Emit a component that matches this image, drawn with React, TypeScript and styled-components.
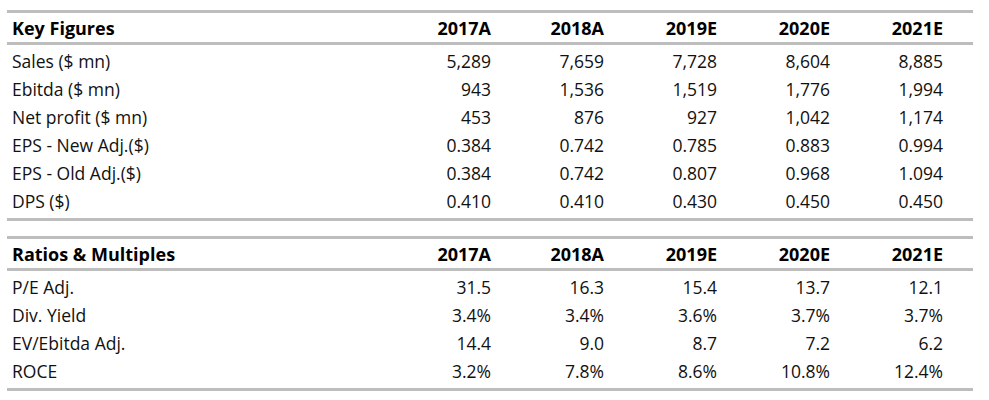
import React from 'react';
import styled, { createGlobalStyle } from 'styled-components';

type Section = {
  title: string;
  rows: [string, ...string[]][];
};

const YEARS = ['2017A', '2018A', '2019E', '2020E', '2021E'];

const SECTIONS: Section[] = [
  {
    title: 'Key Figures',
    rows: [
      ['Sales ($ mn)', '5,289', '7,659', '7,728', '8,604', '8,885'],
      ['Ebitda ($ mn)', '943', '1,536', '1,519', '1,776', '1,994'],
      ['Net profit ($ mn)', '453', '876', '927', '1,042', '1,174'],
      ['EPS - New Adj.($)', '0.384', '0.742', '0.785', '0.883', '0.994'],
      ['EPS - Old Adj.($)', '0.384', '0.742', '0.807', '0.968', '1.094'],
      ['DPS ($)', '0.410', '0.410', '0.430', '0.450', '0.450'],
    ],
  },
  {
    title: 'Ratios & Multiples',
    rows: [
      ['P/E Adj.', '31.5', '16.3', '15.4', '13.7', '12.1'],
      ['Div. Yield', '3.4%', '3.4%', '3.6%', '3.7%', '3.7%'],
      ['EV/Ebitda Adj.', '14.4', '9.0', '8.7', '7.2', '6.2'],
      ['ROCE', '3.2%', '7.8%', '8.6%', '10.8%', '12.4%'],
    ],
  },
];

const App: React.FC = () => {
  return (
    <>
      <GlobalStyle />
      <Page>
        {SECTIONS.map((section) => (
          <Table key={section.title}>
            <HeaderRow>
              <Cell>{section.title}</Cell>
              {YEARS.map((year) => (
                <NumCell key={year}>{year}</NumCell>
              ))}
            </HeaderRow>
            <Body>
              {section.rows.map(([label, ...values]) => (
                <Row key={label}>
                  <Cell>{label}</Cell>
                  {values.map((v, idx) => (
                    <NumCell key={idx}>{v}</NumCell>
                  ))}
                </Row>
              ))}
            </Body>
          </Table>
        ))}
      </Page>
    </>
  );
};

export default App;

const GlobalStyle = createGlobalStyle`
  body {
    margin: 0;
    background: #ffffff;
    font-family: 'Open Sans', 'Liberation Sans', sans-serif;
    color: #111111;
  }
`;

const Page = styled.div`
  width: 966px;
  padding: 10px 0 0 7px;
  display: flex;
  flex-direction: column;
  gap: 15px;
`;

const Table = styled.div`
  border-top: 3px solid #bdbdbd;
  border-bottom: 3px solid #bdbdbd;
`;

const Grid = styled.div`
  display: grid;
  grid-template-columns: 1fr repeat(5, 113px);
  padding: 0 30px 0 5px;
  align-items: center;
`;

const HeaderRow = styled(Grid)`
  height: 29px;
  font-weight: 700;
  font-size: 18px;
  color: #000000;
  border-bottom: 3px solid #bdbdbd;
`;

const Body = styled.div`
  padding: 2px 0 3px;
`;

const Row = styled(Grid)`
  height: 28px;
  font-size: 17.5px;
`;

const Cell = styled.div`
  white-space: nowrap;
`;

const NumCell = styled(Cell)`
  text-align: right;
`;
